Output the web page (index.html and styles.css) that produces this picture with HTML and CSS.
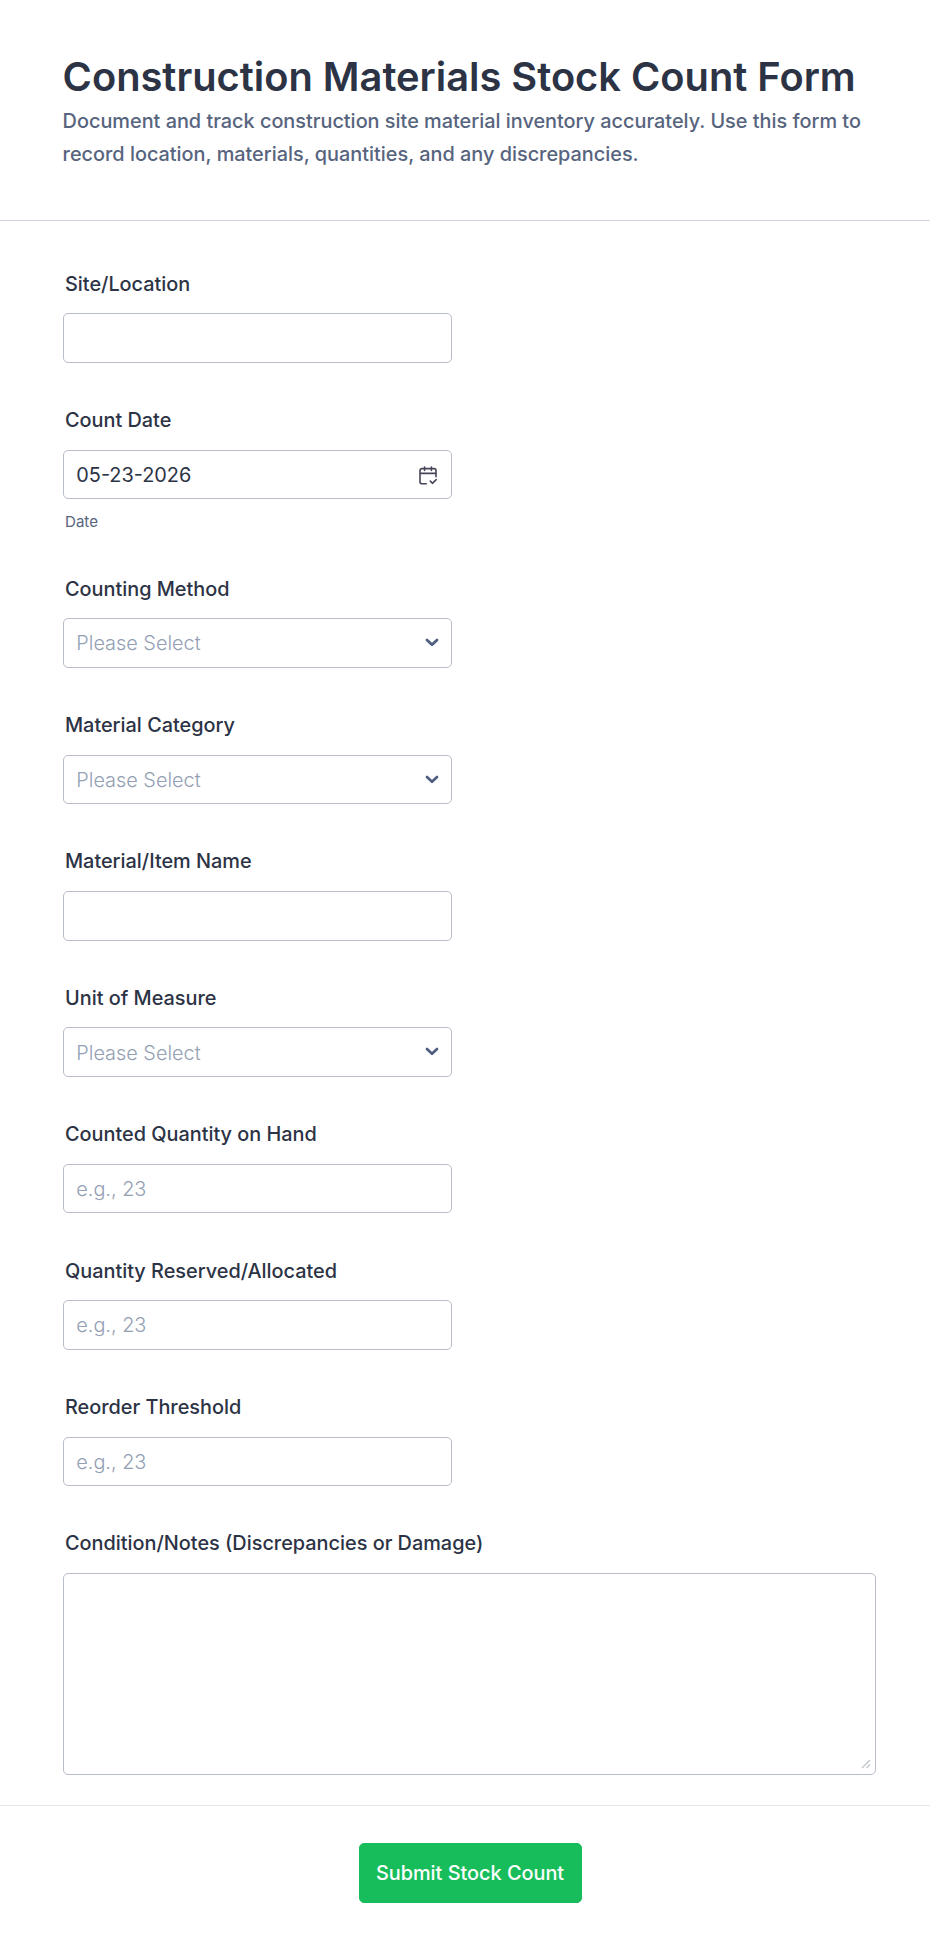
FILE: index.html
```html
<!DOCTYPE html>
<html lang="en">
<head>
	<meta charset="utf-8">
	<title>Construction Materials Stock Count Form</title>
	<link rel="stylesheet" href="styles.css">
</head>
<body>
	<form class="form">
		<div class="form-header">
			<h1 class="title">Construction Materials Stock Count Form</h1>
			<div class="subtitle">Document and track construction site material inventory accurately. Use this form to record location, materials, quantities, and any discrepancies.</div>
		</div>
		<div class="fields">
			<div class="field">
				<label class="label" for="site">Site/Location</label>
				<input class="control" type="text" id="site">
			</div>
			<div class="field">
				<label class="label" for="date">Count Date</label>
				<div class="control-wrap">
					<input class="control" type="text" id="date" value="05-23-2026">
					<svg class="calendar" viewBox="0 0 18 19" fill="none" stroke="#4a4458" stroke-width="1.6" stroke-linecap="round" stroke-linejoin="round">
						<path d="M7.3 17.7H3a2 2 0 0 1-2-2V4.6a2 2 0 0 1 2-2h12a2 2 0 0 1 2 2v6.2M1 7.4h16M5.6 1v3.4M12.4 1v3.4M11.3 15.1l2.1 2.2 3.8-3.6"/>
					</svg>
				</div>
				<div class="sublabel">Date</div>
			</div>
			<div class="field">
				<label class="label" for="method">Counting Method</label>
				<div class="control-wrap">
					<select class="control select" id="method"><option>Please Select</option></select>
					<svg class="arrow" viewBox="0 0 14 9"><path d="M2 2l5 4.8L12 2"/></svg>
				</div>
			</div>
			<div class="field">
				<label class="label" for="category">Material Category</label>
				<div class="control-wrap">
					<select class="control select" id="category"><option>Please Select</option></select>
					<svg class="arrow" viewBox="0 0 14 9"><path d="M2 2l5 4.8L12 2"/></svg>
				</div>
			</div>
			<div class="field">
				<label class="label" for="item">Material/Item Name</label>
				<input class="control" type="text" id="item">
			</div>
			<div class="field">
				<label class="label" for="unit">Unit of Measure</label>
				<div class="control-wrap">
					<select class="control select" id="unit"><option>Please Select</option></select>
					<svg class="arrow" viewBox="0 0 14 9"><path d="M2 2l5 4.8L12 2"/></svg>
				</div>
			</div>
			<div class="field">
				<label class="label" for="counted">Counted Quantity on Hand</label>
				<input class="control" type="text" id="counted" placeholder="e.g., 23">
			</div>
			<div class="field">
				<label class="label" for="reserved">Quantity Reserved/Allocated</label>
				<input class="control" type="text" id="reserved" placeholder="e.g., 23">
			</div>
			<div class="field">
				<label class="label" for="threshold">Reorder Threshold</label>
				<input class="control" type="text" id="threshold" placeholder="e.g., 23">
			</div>
			<div class="field field-wide">
				<label class="label" for="notes">Condition/Notes (Discrepancies or Damage)</label>
				<div class="control-wrap">
					<textarea class="control textarea" id="notes"></textarea>
					<svg class="grip" viewBox="0 0 10 10"><path d="M1 9l8-8M5.5 9L9 5.5"/></svg>
				</div>
			</div>
		</div>
		<div class="form-footer">
			<button class="submit" type="button">Submit Stock Count</button>
		</div>
	</form>
</body>
</html>
```
FILE: styles.css
```css
*{
	box-sizing: border-box;
}

body{
	margin: 0;
	background-color: #fff;
	color: #2c3345;
	font-family: Inter, sans-serif;
	font-size: 19.86px;
}

.form-header{
	height: 221px;
	padding: 52px 54px 0 62.6px;
	border-bottom: 1px solid #d3d6e0;
}

.title{
	margin: 0;
	font-size: 39.8px;
	font-weight: 600;
	line-height: 50px;
	white-space: nowrap;
}

.subtitle{
	margin-top: 3px;
	color: #57647e;
	font-weight: 500;
	line-height: 32.6px;
}

.fields{
	display: flex;
	flex-direction: column;
	gap: 45.3px;
	padding: 50.7px 54px 29.7px 62.6px;
}

.field{
	width: 389px;
}

.field-wide{
	width: 813px;
}

.label{
	display: block;
	margin: 0 0 17.5px 2.4px;
	font-weight: 500;
	line-height: 24px;
}

.control-wrap{
	position: relative;
}

.control{
	display: block;
	width: 100%;
	height: 49.6px;
	padding: 1px 12px 0 12.7px;
	border: 1px solid #b8bdcc;
	border-radius: 5px;
	background-color: #fff;
	color: #2c3345;
	font-family: inherit;
	font-size: 19.86px;
	outline: none;
}

.control::placeholder{
	color: #93a0b4;
	font-weight: 300;
	opacity: 1;
}

.select{
	appearance: none;
	color: #93a0b4;
	font-weight: 300;
}

.textarea{
	height: 202px;
	resize: none;
}

/* icons sit on top of the inputs */
.calendar{
	position: absolute;
	top: 16px;
	right: 14.4px;
	width: 18px;
	height: 19px;
}

.arrow{
	position: absolute;
	top: 20px;
	right: 13px;
	width: 14px;
	height: 9px;
	fill: none;
	stroke: #4f5d80;
	stroke-width: 2.7;
	stroke-linecap: round;
	stroke-linejoin: round;
}

.grip{
	position: absolute;
	right: 5px;
	bottom: 6px;
	width: 10px;
	height: 10px;
	fill: none;
	stroke: #c3c6ce;
	stroke-width: 1.4;
}

.sublabel{
	margin: 13.2px 0 0 2.4px;
	color: #57647e;
	font-size: 15.1px;
	line-height: 19px;
}

.form-footer{
	display: flex;
	justify-content: center;
	padding: 37px 0 49px 10px;
	border-top: 1px solid #e6e7ef;
}

.submit{
	width: 223px;
	height: 60px;
	padding: 0;
	border: 1px solid #18bd5b;
	border-radius: 5px;
	background-color: #18bd5b;
	color: #fff;
	font-family: inherit;
	font-size: 19.86px;
	font-weight: 500;
}
```
